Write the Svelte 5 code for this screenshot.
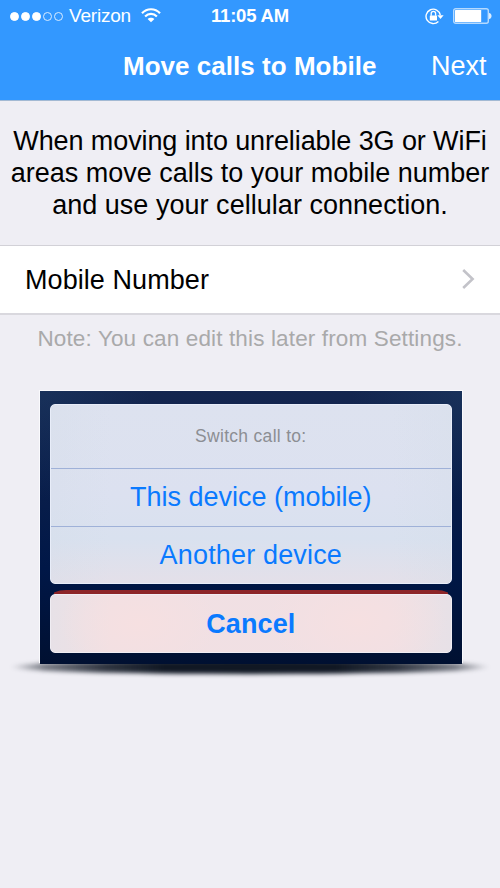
<script>
  const signal = [true, true, true, false, false];
  const message = [
    { text: 'When moving into unreliable 3G or WiFi', spacing: -0.1 },
    { text: 'areas move calls to your mobile number', spacing: 0 },
    { text: 'and use your cellular connection.', spacing: 0.03 }
  ];
</script>

<div class="screen">
  <header>
    <div class="status">
      <div class="dots">
        {#each signal as filled}
          <i class:filled></i>
        {/each}
      </div>
      <span class="carrier">Verizon</span>
      <svg class="wifi" width="20" height="15" viewBox="0 0 20 15" fill="none" stroke="#fff" stroke-width="2.2">
        <path d="M1 5.3C6-.1 14-.1 19 5.3M4.1 8.5C7.5 5 12.5 5 15.9 8.5" />
        <path d="M10 14.3L6.6 11C8.4 9.2 11.6 9.2 13.4 11Z" fill="#fff" stroke="none" />
      </svg>
      <span class="time">11:05 AM</span>
      <svg class="lock" width="19" height="17" viewBox="0 0 19 17" fill="none" stroke="#fff">
        <path d="M15.3 7A7.2 7.2 0 1 0 13.4 13.4" stroke-width="1.4" />
        <path d="M12.4 7.2h6.2l-3.1 3.8z" fill="#fff" stroke="none" />
        <rect x="4.8" y="7.4" width="7.2" height="5.2" rx=".5" fill="#fff" stroke="none" />
        <path d="M6.2 7.8V5.6a2.2 2.2 0 0 1 4.4 0V7.8" stroke-width="1.3" />
      </svg>
      <svg class="battery" width="39" height="16" viewBox="0 0 39 16">
        <rect x=".7" y=".7" width="34.6" height="14.6" rx="2" fill="none" stroke="#b5daff" stroke-width="1.4" />
        <rect x="2" y="2" width="26.2" height="12" rx=".6" fill="#fff" />
        <path d="M36 5C39.4 5.2 39.4 10.8 36 11Z" fill="#d9ecff" />
      </svg>
    </div>
    <div class="nav">
      <h1>Move calls to Mobile</h1>
      <span class="next">Next</span>
    </div>
  </header>

  <div class="message">
    {#each message as line}
      <div style:letter-spacing="{line.spacing}px">{line.text}</div>
    {/each}
  </div>

  <div class="row">
    <span>Mobile Number</span>
    <svg width="14" height="20" viewBox="0 0 14 20" fill="none" stroke="#c3c3c9" stroke-width="2.6">
      <path d="M1.2 1L10.6 10L1.2 19" />
    </svg>
  </div>
  <p class="note">Note: You can edit this later from Settings.</p>

  <div class="preview">
    <div class="shadow"></div>
    <div class="frame">
      <div class="sheet">
        <div class="heading">Switch call to:</div>
        <div class="option first">This device (mobile)</div>
        <div class="option second">Another device</div>
      </div>
      <div class="red">
        <div class="cancel"><span>Cancel</span></div>
      </div>
    </div>
  </div>
</div>

<style>
  :global(body) { margin: 0; }
  .screen {
    width: 500px;
    height: 888px;
    overflow: hidden;
    background: #efeef4;
    font-family: "Liberation Sans", Arial, sans-serif;
    color: #000;
    white-space: nowrap;
  }
  header {
    height: 101px;
    box-sizing: border-box;
    background: #3398ff;
    border-bottom: 1px solid #a3b9d3;
    color: #fff;
  }
  .status { display: flex; align-items: center; height: 32px; padding-left: 10px; }
  .dots { display: flex; gap: 2px; width: 59px; }
  .dots i {
    width: 9px;
    height: 9px;
    box-sizing: border-box;
    border: 1px solid #d9ecff;
    border-radius: 50%;
  }
  .dots .filled { background: #fff; border-color: #fff; }
  .carrier { width: 72px; font-size: 19px; letter-spacing: -0.2px; }
  .wifi { margin-top: -1px; }
  .time { width: 214px; margin-left: 50px; font-size: 18.5px; font-weight: bold; letter-spacing: -0.2px; }
  .lock { margin-right: 9px; }
  .nav { display: flex; height: 68px; align-items: center; padding-left: 123px; }
  h1 { width: 308px; margin: 0; font-size: 26px; font-weight: bold; letter-spacing: 0.03px; }
  .next { font-size: 27px; }
  .message { height: 120px; padding-top: 24px; text-align: center; font-size: 27px; line-height: 32px; }
  .row {
    display: flex;
    align-items: center;
    height: 70px;
    box-sizing: border-box;
    padding: 0 24px 0 25px;
    border-top: 1px solid #d2d1d7;
    border-bottom: 2px solid #d9d8de;
    background: #fff;
    font-size: 27px;
    letter-spacing: 0.07px;
  }
  .row span { padding-top: 2px; }
  .row svg { margin: -1px 0 0 auto; }
  .note { height: 76px; margin: 0; text-align: center; font-size: 22.5px; letter-spacing: 0.14px; line-height: 47px; color: #a9a9aa; }
  .preview { position: relative; padding: 0 38px; }
  .shadow {
    position: absolute;
    left: 10px;
    top: 269px;
    width: 480px;
    height: 14px;
    border-radius: 50%;
    background: linear-gradient(90deg, #11182400, #11182488 7%, #111824dd 20%, #111824 32%, #111824 68%, #111824dd 80%, #11182488 93%, #11182400);
    filter: blur(2px);
  }
  .frame {
    position: relative;
    height: 273px;
    box-sizing: border-box;
    margin: 0 0 0 2px;
    width: 421.6px;
    padding: 13px 10px 0;
    background:
      radial-gradient(circle 110px at 0 0, #1e406a66, transparent),
      radial-gradient(circle 110px at 100% 0, #1e406a66, transparent),
      linear-gradient(#14264f, #001747 65%, #001031);
    box-shadow: -1px -1px 0 #fafafd, 1px -1px 0 #fafafd;
  }
  .sheet {
    height: 180px;
    box-sizing: border-box;
    overflow: hidden;
    border: 1px solid #e8edf9;
    border-radius: 5px;
    background:
      linear-gradient(90deg, #d5dee950, transparent 15%, transparent 85%, #d5dee950),
      linear-gradient(#dde2ef, #dce1f0 50%, #d9e1ef 75%, #e4e0e9);
    text-align: center;
  }
  .heading { height: 63px; line-height: 62px; font-size: 17.5px; letter-spacing: 0.3px; color: #8c8e93; }
  .option {
    height: 58px;
    box-sizing: border-box;
    border-top: 1px solid #9fb1d8;
    line-height: 57px;
    font-size: 27px;
    color: #0a7aff;
    letter-spacing: 0;
  }
  .second { letter-spacing: 0.16px; }
  .red {
    height: 63px;
    margin-top: 6px;
    box-sizing: border-box;
    padding-top: 4px;
    background: linear-gradient(#8d2528, #8d2528) center top / 394px 6px no-repeat;
    border-radius: 16px 16px 5px 5px / 8px 8px 5px 5px;
  }
  .cancel {
    height: 59px;
    box-sizing: border-box;
    border: 1px solid #f0edf3;
    border-radius: 5px;
    background:
      radial-gradient(ellipse 80px 50px at 88px 28px, #f6e0e1, transparent),
      radial-gradient(ellipse 90px 55px at 306px 26px, #f6e0e1, transparent),
      linear-gradient(90deg, #e7e1e7, #f1e0e3 15%, #f0e0e4 85%, #e7e1e7);
    text-align: center;
    line-height: 58px;
    font-size: 27px;
    font-weight: bold;
    letter-spacing: 0.1px;
    color: #0a7aff;
  }
</style>
